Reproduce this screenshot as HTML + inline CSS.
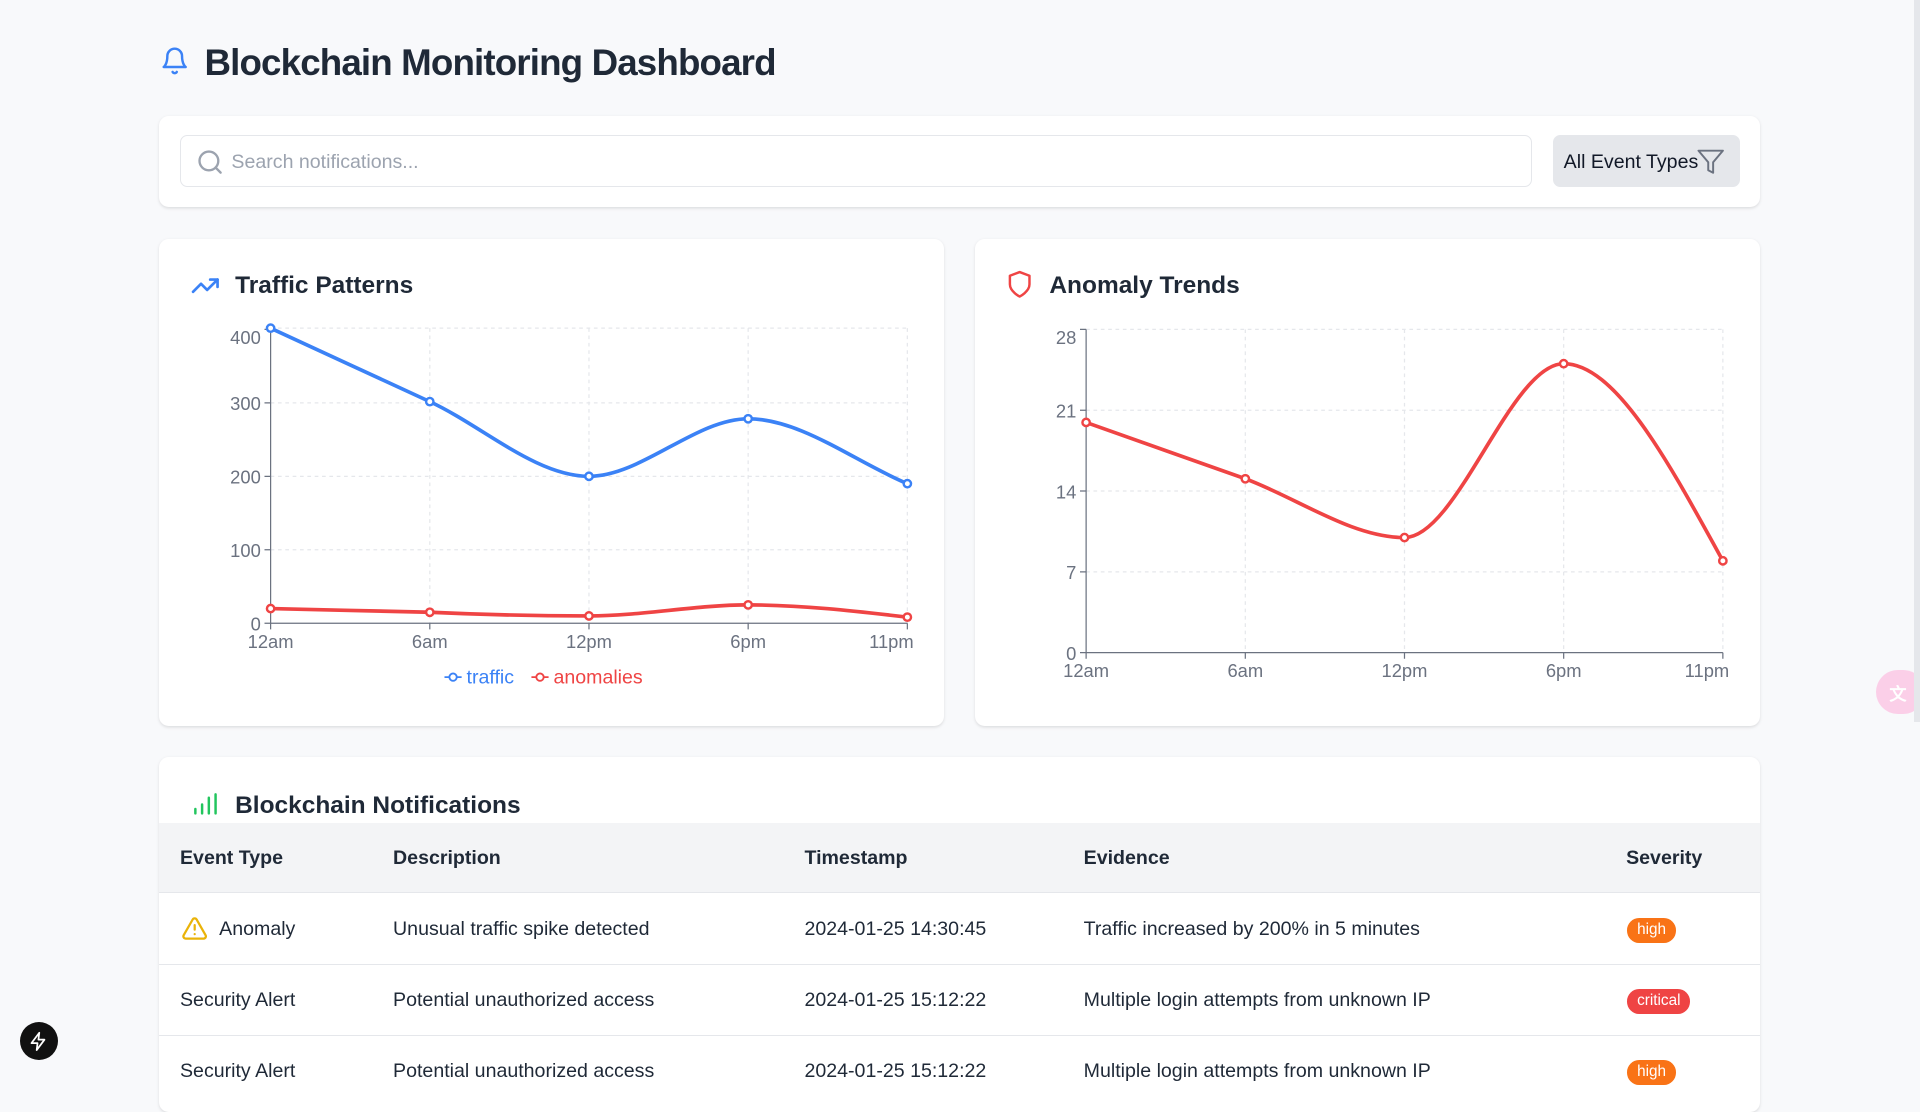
<!DOCTYPE html>
<html><head><meta charset="utf-8"><style>
html{zoom:1.2244898}
*{box-sizing:border-box;margin:0;padding:0}
body{width:1568px;height:882px;overflow:hidden;background:#f8f9fb;font-family:"Liberation Sans",sans-serif;color:#1f2937;position:relative}
.abs{position:absolute}
.card{position:absolute;background:#fff;border-radius:8px;box-shadow:0 1px 3px rgba(0,0,0,.08),0 1px 2px rgba(0,0,0,.04)}
h1{position:absolute;left:167px;top:34px;font-size:30px;font-weight:bold;letter-spacing:-0.7px}
.ct{position:absolute;font-size:20px;font-weight:bold;color:#1f2937}
.th{position:absolute;font-size:16px;font-weight:bold;top:692px}
.td{position:absolute;font-size:16px}
.badge{position:absolute;color:#fff;font-size:12.5px;border-radius:10px;height:20px;line-height:20px;padding:0 8px}
svg text{font-family:"Liberation Sans",sans-serif}
</style></head><body>
<svg class="abs" style="left:131px;top:37px" width="24" height="26" viewBox="0 0 24 24" fill="none" stroke="#3b82f6" stroke-width="2" stroke-linecap="round" stroke-linejoin="round"><path d="M6 8a6 6 0 0 1 12 0c0 7 3 9 3 9H3s3-2 3-9"/><path d="M10.3 21a1.94 1.94 0 0 0 3.4 0"/></svg>
<h1>Blockchain Monitoring Dashboard</h1>

<div class="card" style="left:130px;top:95px;width:1307px;height:74px"></div>
<div class="abs" style="left:147px;top:110px;width:1104px;height:43px;border:1px solid #e5e7eb;border-radius:6px;background:#fff"></div>
<svg class="abs" style="left:160px;top:121px" width="23" height="23" viewBox="0 0 24 24" fill="none" stroke="#9ca3af" stroke-width="2" stroke-linecap="round"><circle cx="11" cy="11" r="8"/><path d="m21 21-4.3-4.3"/></svg>
<div class="abs" style="left:189px;top:123px;font-size:16px;color:#9ca3af">Search notifications...</div>
<div class="abs" style="left:1268px;top:110px;width:153px;height:43px;background:#e5e7eb;border-radius:6px"></div>
<div class="abs" style="left:1277px;top:123px;font-size:16px;color:#111827">All Event Types</div>
<svg class="abs" style="left:1385px;top:120px" width="24" height="24" viewBox="0 0 24 24" fill="none" stroke="#6b7280" stroke-width="1.6" stroke-linejoin="round"><path d="M22 3H2l8 9.460V19l4 2v-8.54L22 3z"/></svg>

<div class="card" style="left:130px;top:195px;width:641px;height:398px"></div>
<div class="card" style="left:796px;top:195px;width:641px;height:398px"></div>
<svg class="abs" style="left:155px;top:221px" width="25" height="24" viewBox="0 0 24 24" fill="none" stroke="#3b82f6" stroke-width="2.2" stroke-linecap="round" stroke-linejoin="round"><path d="m22 7-8.5 8.5-5-5L2 17"/><path d="M16 7h6v6"/></svg>
<div class="ct" style="left:192px;top:222px">Traffic Patterns</div>
<svg class="abs" style="left:821px;top:220px" width="24" height="25" viewBox="0 0 24 24" fill="none" stroke="#ef4444" stroke-width="2" stroke-linejoin="round"><path d="M12 22s8-4 8-10V5l-8-3-8 3v7c0 6 8 10 8 10z"/></svg>
<div class="ct" style="left:857px;top:222px">Anomaly Trends</div>

<svg class="abs" style="left:0;top:0" width="1568" height="882" font-size="15" fill="#6b7280">
<g stroke="#e5e7eb" stroke-dasharray="3 3" fill="none">
<path d="M221 268H741M221 329H741M221 389H741M221 449H741M351 268V509M481 268V509M611 268V509M741 268V509"/>
<path d="M887 269H1407M887 335H1407M887 401H1407M887 467H1407M1017 269V533M1147 269V533M1277 269V533M1407 269V533"/>
</g>
<g stroke="#6b7280" fill="none">
<path d="M221 268V509H741M216 269H221M216 329H221M216 389H221M216 449H221M216 509H221M221 509V514M351 509V514M481 509V514M611 509V514M741 509V514"/>
<path d="M887 269V533H1407M882 269H887M882 335H887M882 401H887M882 467H887M882 533H887M887 533V538M1017 533V538M1147 533V538M1277 533V538M1407 533V538"/>
</g>
<g text-anchor="end"><text x="213" y="281">400</text><text x="213" y="335">300</text><text x="213" y="395">200</text><text x="213" y="455">100</text><text x="213" y="515">0</text>
<text x="879" y="281">28</text><text x="879" y="341">21</text><text x="879" y="407">14</text><text x="879" y="473">7</text><text x="879" y="539">0</text></g>
<g text-anchor="middle"><text x="221" y="529">12am</text><text x="351" y="529">6am</text><text x="481" y="529">12pm</text><text x="611" y="529">6pm</text><text x="728" y="529">11pm</text>
<text x="887" y="553">12am</text><text x="1017" y="553">6am</text><text x="1147" y="553">12pm</text><text x="1277" y="553">6pm</text><text x="1394" y="553">11pm</text></g>
<path d="M221 268C264 288 308 308 351 328C394 348 438 389 481 389C524 389 568 342 611 342C654 342 698 377 741 395" stroke="#3b82f6" stroke-width="3" fill="none"/>
<path d="M221 497C264 498 308 499 351 500C394 502 438 503 481 503C524 503 568 494 611 494C654 494 698 499 741 504" stroke="#ef4444" stroke-width="3" fill="none"/>
<path d="M887 345C930 360 974 376 1017 391C1060 407 1104 439 1147 439C1190 439 1234 297 1277 297C1320 297 1364 380 1407 458" stroke="#ef4444" stroke-width="3" fill="none"/>
<g fill="#fff" stroke="#3b82f6" stroke-width="2"><circle cx="221" cy="268" r="3"/><circle cx="351" cy="328" r="3"/><circle cx="481" cy="389" r="3"/><circle cx="611" cy="342" r="3"/><circle cx="741" cy="395" r="3"/></g>
<g fill="#fff" stroke="#ef4444" stroke-width="2"><circle cx="221" cy="497" r="3"/><circle cx="351" cy="500" r="3"/><circle cx="481" cy="503" r="3"/><circle cx="611" cy="494" r="3"/><circle cx="741" cy="504" r="3"/>
<circle cx="887" cy="345" r="3"/><circle cx="1017" cy="391" r="3"/><circle cx="1147" cy="439" r="3"/><circle cx="1277" cy="297" r="3"/><circle cx="1407" cy="458" r="3"/></g>
<path d="M363 553H377" stroke="#3b82f6" stroke-width="1.5"/><circle cx="370" cy="553" r="3" fill="#fff" stroke="#3b82f6" stroke-width="1.5"/>
<text x="381" y="558" fill="#3b82f6" font-size="16">traffic</text>
<path d="M434 553H448" stroke="#ef4444" stroke-width="1.5"/><circle cx="441" cy="553" r="3" fill="#fff" stroke="#ef4444" stroke-width="1.5"/>
<text x="452" y="558" fill="#ef4444" font-size="16">anomalies</text>
</svg>

<div class="card" style="left:130px;top:618px;width:1307px;height:290px;overflow:hidden">
<div class="abs" style="left:0;top:54px;width:1307px;height:57px;background:#f3f4f6;border-bottom:1px solid #e5e7eb"></div>
<div class="abs" style="left:0;top:169px;width:1307px;height:1px;background:#e5e7eb"></div>
<div class="abs" style="left:0;top:227px;width:1307px;height:1px;background:#e5e7eb"></div>
</div>
<svg class="abs" style="left:157px;top:646px" width="22" height="22" viewBox="0 0 24 24" fill="none" stroke="#22c55e" stroke-width="2.2" stroke-linecap="round"><path d="M4 20v-4M10 20v-8M16 20V6M22 20V3" transform="translate(-1 0)"/></svg>
<div class="ct" style="left:192px;top:647px">Blockchain Notifications</div>
<div class="th" style="left:147px">Event Type</div><div class="th" style="left:321px">Description</div><div class="th" style="left:657px">Timestamp</div><div class="th" style="left:885px">Evidence</div><div class="th" style="left:1328px">Severity</div>

<svg class="abs" style="left:147px;top:747px" width="24" height="22" viewBox="0 0 24 24" fill="none" stroke="#eab308" stroke-width="2" stroke-linecap="round" stroke-linejoin="round"><path d="m21.7 18-8-14a2 2 0 0 0-3.5 0l-8 14A2 2 0 0 0 4 21h16a2 2 0 0 0 1.700-3z"/><path d="M12 9v4M12 17h.01"/></svg>
<div class="td" style="left:179px;top:750px">Anomaly</div><div class="td" style="left:321px;top:750px">Unusual traffic spike detected</div><div class="td" style="left:657px;top:750px">2024-01-25 14:30:45</div><div class="td" style="left:885px;top:750px">Traffic increased by 200% in 5 minutes</div>
<div class="badge" style="left:1329px;top:750px;background:#f97316">high</div>
<div class="td" style="left:147px;top:808px">Security Alert</div><div class="td" style="left:321px;top:808px">Potential unauthorized access</div><div class="td" style="left:657px;top:808px">2024-01-25 15:12:22</div><div class="td" style="left:885px;top:808px">Multiple login attempts from unknown IP</div>
<div class="badge" style="left:1329px;top:808px;background:#ef4444">critical</div>
<div class="td" style="left:147px;top:866px">Security Alert</div><div class="td" style="left:321px;top:866px">Potential unauthorized access</div><div class="td" style="left:657px;top:866px">2024-01-25 15:12:22</div><div class="td" style="left:885px;top:866px">Multiple login attempts from unknown IP</div>
<div class="badge" style="left:1329px;top:866px;background:#f97316">high</div>

<div class="abs" style="left:16px;top:835px;width:31px;height:31px;border-radius:50%;background:#111"></div>
<svg class="abs" style="left:23px;top:842px" width="17" height="17" viewBox="0 0 24 24" fill="none" stroke="#fff" stroke-width="2" stroke-linejoin="round"><path d="M13 2 4 14h7l-1 8 9-12h-7z"/></svg>
<div class="abs" style="left:1532px;top:547px;width:40px;height:36px;border-radius:18px;background:#fbcfe8"></div>
<div class="abs" style="left:1543px;top:555px;font-size:14px;color:#fff;font-weight:bold">文</div>
<div class="abs" style="left:1563px;top:0;width:5px;height:590px;background:#e5e7eb"></div>
</body></html>
